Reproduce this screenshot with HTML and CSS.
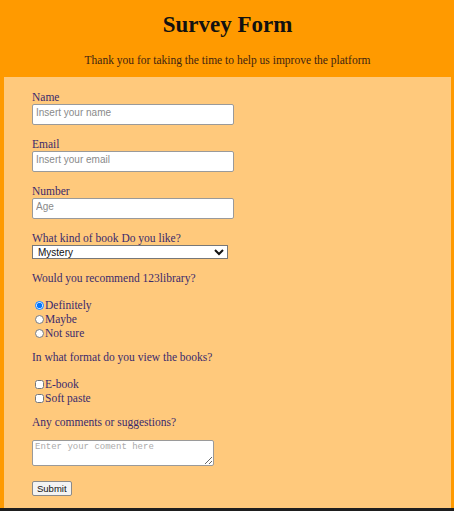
FILE: index.html
```html
<!DOCTYPE html>
<html lang="en">
<head>
<meta charset="utf-8">
<title>Survey Form</title>
<link rel="stylesheet" href="styles.css">
</head>
<body>
<div class="page">
  <header class="header">
    <h1 class="title">Survey Form</h1>
    <p class="subtitle">Thank you for taking the time to help us improve the platform</p>
  </header>
  <form class="form">
    <div class="field">
      <label class="label" for="name">Name</label>
      <input class="text-input" id="name" type="text" placeholder="Insert your name">
    </div>
    <div class="field">
      <label class="label" for="email">Email</label>
      <input class="text-input" id="email" type="email" placeholder="Insert your email">
    </div>
    <div class="field">
      <label class="label" for="number">Number</label>
      <input class="text-input" id="number" type="number" placeholder="Age">
    </div>
    <div class="field">
      <label class="label" for="book">What kind of book Do you like?</label>
      <select class="select" id="book">
        <option>Mystery</option>
        <option>Fantasy</option>
        <option>Romance</option>
      </select>
    </div>
    <div class="field group">
      <p class="question">Would you recommend 123library?</p>
      <label class="option"><input class="radio" type="radio" name="rec" checked>Definitely</label>
      <label class="option"><input class="radio" type="radio" name="rec">Maybe</label>
      <label class="option"><input class="radio" type="radio" name="rec">Not sure</label>
    </div>
    <div class="field group">
      <p class="question">In what format do you view the books?</p>
      <label class="option"><input class="check" type="checkbox">E-book</label>
      <label class="option"><input class="check" type="checkbox">Soft paste</label>
    </div>
    <div class="field group last-group">
      <p class="question short">Any comments or suggestions?</p>
      <textarea class="textarea" placeholder="Enter your coment here"></textarea>
    </div>
    <div class="field">
      <button class="submit" type="submit">Submit</button>
    </div>
  </form>
</div>
</body>
</html>
```
FILE: styles.css
```css
html, body {
  margin: 0;
  padding: 0;
}
body {
  background: #1e1e1e;
  font-family: "Liberation Serif", "Times New Roman", serif;
}
.page {
  background: #ff9a00;
  height: 508px;
  box-sizing: border-box;
  padding: 0 3px 0 4px;
  display: flex;
  flex-direction: column;
  overflow: hidden;
}
.header {
  flex: 0 0 77px;
  text-align: center;
  box-sizing: border-box;
  padding-top: 11px;
}
.title {
  margin: 0;
  font-size: 23px;
  line-height: 27px;
  font-weight: bold;
  color: #111;
}
.subtitle {
  margin: 14px 0 0;
  font-size: 11.5px;
  line-height: 16px;
  color: #3e2412;
}
.form {
  flex: 1;
  background: #ffc97c;
  padding: 14px 0 0 28px;
  display: flex;
  flex-direction: column;
}
.field {
  display: flex;
  flex-direction: column;
  align-items: flex-start;
  margin-bottom: 13px;
}
.group {
  margin-bottom: 11px;
}
.last-group {
  margin-bottom: 15px;
}
.label, .question {
  font-size: 11.5px;
  line-height: 13px;
  color: #3b2a6c;
}
.option {
  font-size: 11.5px;
  line-height: 14px;
  color: #3b2a6c;
}
.question {
  margin: 0 0 13px;
}
.question.short {
  margin-bottom: 11px;
}
.text-input {
  width: 202px;
  height: 21px;
  box-sizing: border-box;
  margin: 0;
  padding: 1px 3px 6px;
  border: 1px solid #9a9a9a;
  border-radius: 2px;
  background: #fff;
  font-family: "Liberation Sans", Arial, sans-serif;
  font-size: 10px;
}
.text-input::placeholder {
  color: #8a8a8a;
}
.select {
  width: 196px;
  height: 14px;
  box-sizing: border-box;
  margin: 0;
  padding: 0 0 0 1px;
  border: 1px solid #777;
  border-radius: 0;
  background: #fff;
  font-family: "Liberation Sans", Arial, sans-serif;
  font-size: 10px;
  line-height: 12px;
  color: #111;
}
.option {
  display: flex;
  align-items: center;
}
.radio, .check {
  margin: 0 1px 0 3px;
  width: 9px;
  height: 9px;
}
.textarea {
  width: 182px;
  height: 26px;
  box-sizing: border-box;
  margin: 0;
  padding: 1px 2px;
  border: 1px solid #9a9a9a;
  border-radius: 2px;
  background: #fff;
  font-family: "Liberation Mono", "Courier New", monospace;
  font-size: 9px;
  resize: vertical;
}
.textarea::placeholder {
  color: #aaa;
}
.submit {
  height: 15px;
  box-sizing: border-box;
  margin: 0;
  padding: 0 4px;
  border: 1px solid #8a8a8a;
  border-radius: 2px;
  background: #f3f3f3;
  font-family: "Liberation Sans", Arial, sans-serif;
  font-size: 9.5px;
  line-height: 12px;
  color: #111;
}
```
